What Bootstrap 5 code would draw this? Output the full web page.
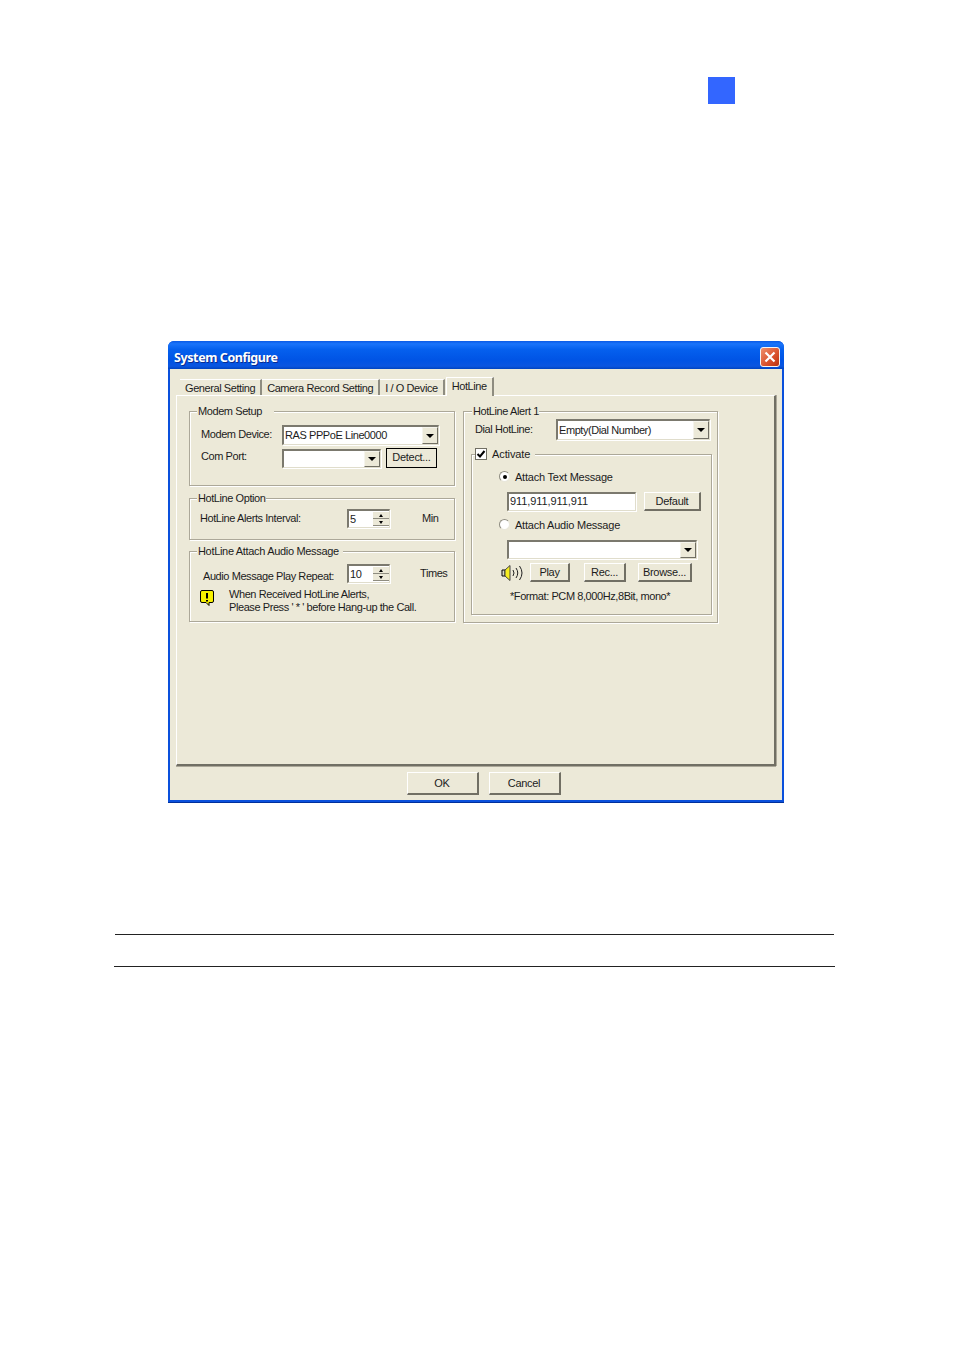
<!DOCTYPE html>
<html lang="en">
<head>
<meta charset="utf-8">
<title>System Configure</title>
<link href="https://cdn.jsdelivr.net/npm/bootstrap@5.3.0/dist/css/bootstrap.min.css" rel="stylesheet">
<style>
html,body{background:#fff;height:1350px;overflow:hidden}
body{font-family:"Liberation Sans",Arial,sans-serif;font-size:11px;letter-spacing:-.42px;line-height:13px;color:#1c1c1c}
.pg-square{width:27px;height:27px;background:#3366ff;margin:77px 0 0 708px}
.win{width:616px;height:462px;margin:237px 0 0 168px;background:#0a50dc;border-radius:6px 6px 0 0;padding:0 2px 2px;display:flex;flex-direction:column;border-bottom:1px solid #00309c}
.win-title{height:28px;flex:none;margin:0 -2px;padding:0 4px 0 6px;border-radius:6px 6px 0 0;background:linear-gradient(#0a5ae6 0,#1a74fa 10%,#0560ee 30%,#0053e4 70%,#0a55e0 90%,#0043c0 100%);display:flex;align-items:center;justify-content:space-between}
.win-title b{font-family:"Noto Sans",sans-serif;font-size:12.5px;color:#fff;letter-spacing:-.4px;text-shadow:1px 1px #0a2c90;margin-top:5px}
.win-close{display:block;width:20px;height:20px;margin-top:4px}
.win-body{flex:1;background:#ece9d8;padding:8px 6px 0 6px;display:flex;flex-direction:column;min-height:0}
.tabs-x{height:18px;padding-left:4px;flex:none;align-items:flex-end;flex-wrap:nowrap}
.tab-x{height:16px;padding:0 5px;text-align:center;border-right:2px solid #8e8c80;border-top:1px solid #fff;white-space:nowrap;line-height:16px}
.tab-on{height:19px;margin-left:1px;border-left:1px solid #fff;position:relative;top:1px;background:#ece9d8;z-index:1;padding:0 5px}
.panel-x{height:371px;flex:none;border:1px solid #fff;border-right:2px solid #716f64;border-bottom:2px solid #716f64;box-shadow:1px 0 #aca899,0 1px #aca899;padding:8px 0 0 12px;display:flex;gap:8px}
.col-l{width:266px;flex:none}
.col-r{width:255px;flex:none}
.grp{border:1px solid #aca899;box-shadow:1px 1px #fff,inset 1px 1px #fff;min-width:0;margin:0;padding:0;position:relative}
.grp legend{float:none;width:auto;font-size:11px;line-height:14px;margin:0 0 0 7px;padding:0 12px 0 1px;background:#ece9d8;position:relative;z-index:1}
.g-modem{height:82px;margin-bottom:5px}
.g-opt{height:49px;margin-bottom:4px}
.g-opt legend{padding-right:0}
.g-att{height:78px}
.g-att legend{padding-right:4px;letter-spacing:-.32px}
.g-alert{height:219px;padding-left:7px}
.g-alert>legend{margin-left:1px;padding-right:0}
.g-act{width:241px;height:168px;margin:7px 0 0 0;padding-left:0;letter-spacing:-.22px}
.g-act legend{margin-left:3px;padding:0 5px 0 0;display:flex;align-items:center;gap:5px;letter-spacing:-.1px}
.rw{display:flex;align-items:center}
.lb{white-space:nowrap}
.sunk{background:#fff;border-style:solid;border-width:2px 1px 1px 2px;border-color:#7b796e #e0ddcc #e0ddcc #7b796e;box-shadow:1px 1px #fff;display:flex;align-items:center;overflow:hidden;white-space:nowrap;padding-left:1px}
.sunk>span:first-child{flex:1}
.arr{width:16px;height:100%;flex:none;background:#ece9d8;border:1px solid;border-color:#f5f4ec #716f64 #716f64 #f5f4ec;display:flex;align-items:center;justify-content:center;margin-right:0}
.arr::after{content:"";border-style:solid;border-width:4px 4px 0;border-color:#000 transparent transparent}
.spin-b{width:16px;flex:none;display:flex;flex-direction:column;height:100%;padding:1px 0}
.spin-b i{flex:1;background:#ece9d8;border-bottom:1px solid #8e8c80;display:flex;align-items:center;justify-content:center}
.spin-b i::after{content:"";border-style:solid;border-color:#000 transparent}
.spin-b i:first-child::after{border-width:0 2.5px 3px}
.spin-b i:last-child::after{border-width:3px 2.5px 0}
.xbtn{--bs-btn-padding-x:0;--bs-btn-padding-y:0;--bs-btn-font-size:11px;--bs-btn-line-height:14px;--bs-btn-border-radius:0;--bs-btn-color:#1c1c1c;--bs-btn-bg:#ece9d8;--bs-btn-hover-bg:#ece9d8;--bs-btn-hover-color:#1c1c1c;letter-spacing:-.3px;flex:none;border-width:1px 2px 2px 1px;border-style:solid;border-color:#fff #716f64 #716f64 #fff;display:flex;align-items:center;justify-content:center}
.xbtn:hover{border-color:#fff #716f64 #716f64 #fff}
.xbtn-def{outline:1px solid #000;outline-offset:-1px;box-shadow:inset 1px 1px #fff,inset -1px -1px #8e8c80;border:0;padding-bottom:2px}
.xbtn-def:hover{border:0}
.r1{margin:7px 0 0 11px;height:20px}
.r1 .lb{margin-top:-2px}
.r2{margin:3px 0 0 11px;height:20px}
.r2 .lb{margin-top:-4px}
.w-l1{width:81px}
.cmb1{width:157px;height:20px}
.cmb2{width:99px;height:19px;margin-right:5px}
.b-det{width:51px;height:20px}
.r3{margin:4px 0 0 10px;height:19px}
.w-l3{width:147px}
.spn{width:43px;height:19px}
.u-min{margin-left:32px}
.r4{margin:6px 0 0 13px;height:19px}
.w-l4{width:144px;margin-top:5px}
.u-tim{margin:-1px 0 0 30px}
.r5{margin:5px 0 0 10px;align-items:flex-start}
.r5 svg{flex:none;margin:2px 15px 0 0}
.r6{margin:1px 0 0 4px;height:21px}
.w-l6{width:81px}
.cmb3{width:154px;height:21px}
.rd{width:11px;height:11px;border-radius:50%;background:#fff;border:1px solid #8e8c80;border-right-color:#e8e6da;border-bottom-color:#e8e6da;flex:none;display:flex;align-items:center;justify-content:center;margin-right:5px;margin-top:-1px}
.rd-on::after{content:"";width:4px;height:4px;border-radius:50%;background:#000}
.ck{width:12px;height:12px;flex:none;background:#fff;border:1px solid #716f64;display:block}
.r7{margin:9px 0 0 27px;height:14px}
.r8{margin:7px 0 0 35px;height:20px;gap:8px}
.inp{width:129px;height:19px;letter-spacing:-.09px}
.b-def{width:57px;height:19px}
.r9{margin:7px 0 0 27px;height:14px}
.cmb4{width:190px;height:19px;margin:8px 0 0 35px}
.r11{margin:4px 0 0 29px;height:19px}
.r11 svg{flex:none;margin-right:6px}
.b-play{width:40px;height:19px;margin-right:14px}
.b-rec{width:42px;height:19px;margin-right:12px}
.b-brw{width:54px;height:19px}
.r12{margin:8px 0 0 38px;letter-spacing:-.42px}
.foot-x{flex:1;display:flex;justify-content:center;gap:10px;padding-top:6px;padding-left:15px}
.b-foot{width:72px;height:23px;padding-bottom:1px}
.rule-a{height:1px;background:#222;margin:131px 0 0 115px;width:719px}
.rule-b{height:1px;background:#222;margin:31px 0 0 114px;width:721px}
</style>
</head>
<body>
<div class="pg-square"></div>
<div class="win">
  <div class="win-title">
    <b>System Configure</b>
    <svg class="win-close" viewBox="0 0 20 20"><defs><linearGradient id="cg" x1="0" y1="0" x2="1" y2="1"><stop offset="0" stop-color="#f0926e"/><stop offset=".6" stop-color="#d8502c"/><stop offset="1" stop-color="#b8300c"/></linearGradient></defs><rect x=".5" y=".5" width="19" height="19" rx="2.5" fill="url(#cg)" stroke="#f4f4f4"/><path d="M5.5 5.5l9 9M14.500 5.500l-9 9" stroke="#fff" stroke-width="2.200" fill="none"/></svg>
  </div>
  <div class="win-body">
    <ul class="nav tabs-x list-unstyled m-0">
      <li class="tab-x">General Setting</li>
      <li class="tab-x">Camera Record Setting</li>
      <li class="tab-x">I / O Device</li>
      <li class="tab-x tab-on">HotLine</li>
    </ul>
    <div class="panel-x">
      <div class="col-l">
        <fieldset class="grp g-modem">
          <legend>Modem Setup</legend>
          <div class="rw r1"><span class="lb w-l1">Modem Device:</span><div class="sunk cmb1"><span>RAS PPPoE Line0000</span><i class="arr"></i></div></div>
          <div class="rw r2"><span class="lb w-l1">Com Port:</span><div class="sunk cmb2"><span></span><i class="arr"></i></div><button type="button" class="btn xbtn xbtn-def b-det">Detect...</button></div>
        </fieldset>
        <fieldset class="grp g-opt">
          <legend>HotLine Option</legend>
          <div class="rw r3"><span class="lb w-l3">HotLine Alerts Interval:</span><div class="sunk spn"><span>5</span><span class="spin-b"><i></i><i></i></span></div><span class="lb u-min">Min</span></div>
        </fieldset>
        <fieldset class="grp g-att">
          <legend>HotLine Attach Audio Message</legend>
          <div class="rw r4"><span class="lb w-l4">Audio Message Play Repeat:</span><div class="sunk spn"><span>10</span><span class="spin-b"><i></i><i></i></span></div><span class="lb u-tim">Times</span></div>
          <div class="rw r5">
            <svg width="14" height="17" viewBox="0 0 14 17"><path d="M2 .5h10a1.500 1.500 0 0 1 1.500 1.500v9a1.500 1.500 0 0 1-1.500 1.500H9v3l-3-3H2A1.500 1.500 0 0 1 .5 11V2A1.500 1.500 0 0 1 2 .5z" fill="#f7f000" stroke="#000"/><path d="M7 3v5.500M7 10v1.500" stroke="#000" stroke-width="2" fill="none"/></svg>
            <div>When Received HotLine Alerts,<br>Please Press ' * ' before Hang-up the Call.</div>
          </div>
        </fieldset>
      </div>
      <div class="col-r">
        <fieldset class="grp g-alert">
          <legend>HotLine Alert 1</legend>
          <div class="rw r6"><span class="lb w-l6">Dial HotLine:</span><div class="sunk cmb3"><span>Empty(Dial Number)</span><i class="arr"></i></div></div>
          <fieldset class="grp g-act">
            <legend><svg class="ck" viewBox="0 0 10 10"><path d="M1.500 5l2.500 2.500L8.500 2" stroke="#000" stroke-width="2" fill="none"/></svg>Activate</legend>
            <div class="rw r7"><i class="rd rd-on"></i><span class="lb">Attach Text Message</span></div>
            <div class="rw r8"><div class="sunk inp"><span>911,911,911,911</span></div><button type="button" class="btn xbtn b-def">Default</button></div>
            <div class="rw r9"><i class="rd"></i><span class="lb">Attach Audio Message</span></div>
            <div class="sunk cmb4"><span></span><i class="arr"></i></div>
            <div class="rw r11">
              <svg width="23" height="18" viewBox="0 0 23 18"><path d="M1 6h3v6H1z" fill="#d8d8c8" stroke="#000"/><path d="M4 6l5-4.500v15L4 12z" fill="#f7ee20" stroke="#444"/><path d="M12 6q2 3 0 6M15 4q3.500 5 0 10M18.500 2q5 7 0 14" stroke="#222" fill="none"/></svg>
              <button type="button" class="btn xbtn b-play">Play</button>
              <button type="button" class="btn xbtn b-rec">Rec...</button>
              <button type="button" class="btn xbtn b-brw">Browse...</button>
            </div>
            <div class="r12">*Format: PCM 8,000Hz,8Bit, mono*</div>
          </fieldset>
        </fieldset>
      </div>
    </div>
    <div class="foot-x">
      <button type="button" class="btn xbtn b-foot">OK</button>
      <button type="button" class="btn xbtn b-foot">Cancel</button>
    </div>
  </div>
</div>
<div class="rule-a"></div>
<div class="rule-b"></div>
<script src="https://cdn.jsdelivr.net/npm/bootstrap@5.3.0/dist/js/bootstrap.bundle.min.js"></script>
</body>
</html>
